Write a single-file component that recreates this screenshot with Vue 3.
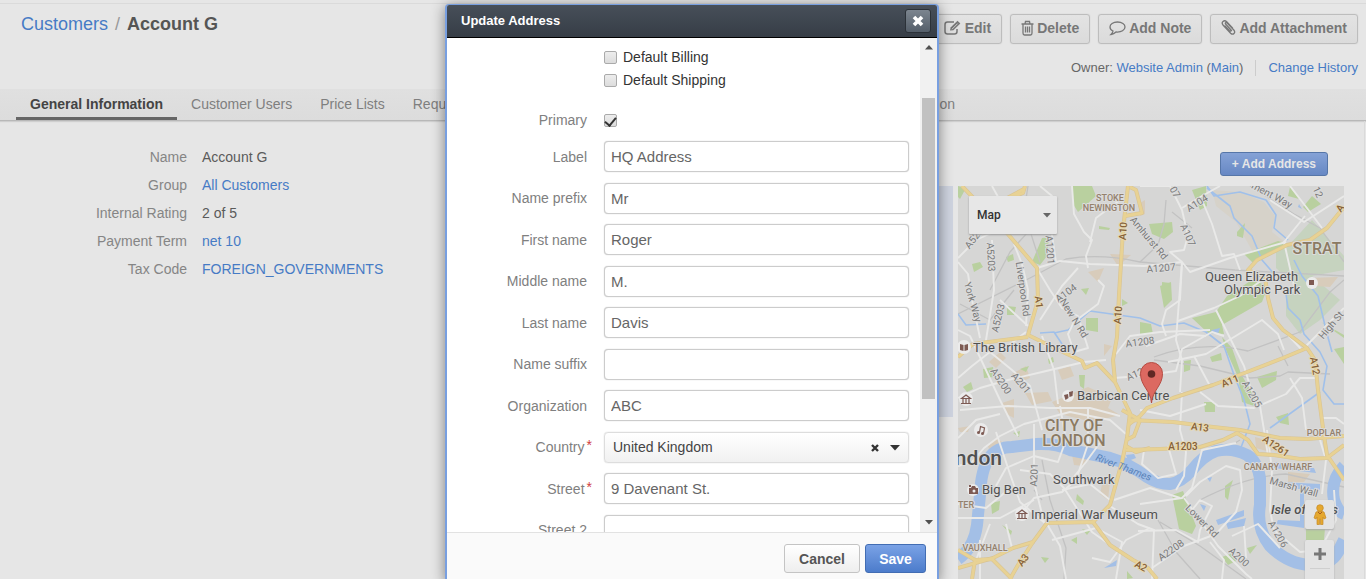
<script setup>
import { reactive, ref } from 'vue'

const tabs = ['General Information', 'Customer Users', 'Price Lists', 'Requests For Quote', 'Quotes', 'Shopping Lists', 'Additional Information']

const details = [
  { label: 'Name', value: 'Account G' },
  { label: 'Group', value: 'All Customers', link: true },
  { label: 'Internal Rating', value: '2 of 5' },
  { label: 'Payment Term', value: 'net 10', link: true },
  { label: 'Tax Code', value: 'FOREIGN_GOVERNMENTS', link: true }
]

const primary = ref(true)
const country = ref('United Kingdom')
const fields = reactive([
  { id: 'label', label: 'Label', value: 'HQ Address' },
  { id: 'prefix', label: 'Name prefix', value: 'Mr' },
  { id: 'first', label: 'First name', value: 'Roger' },
  { id: 'middle', label: 'Middle name', value: 'M.' },
  { id: 'last', label: 'Last name', value: 'Davis' },
  { id: 'suffix', label: 'Name suffix', value: '' },
  { id: 'org', label: 'Organization', value: 'ABC' },
  { id: 'country', label: 'Country', required: true, select: true },
  { id: 'street', label: 'Street', required: true, value: '9 Davenant St.' },
  { id: 'street2', label: 'Street 2', value: '' }
])

const parks = [
  '1073,186 1092,186 1096,196 1085,206 1078,212 1073,204', '958,186 966,188 960,199 958,197',
  '1042,238 1049,237 1047,256 1040,265 1032,262', '1006,257 1013,254 1014,260 1008,262', '972,264 980,262 983,267 974,272',
  '1149,224 1172,222 1173,232 1164,239 1152,234', '1192,190 1206,186 1207,206 1200,210', '1237,232 1245,223 1243,238 1237,236',
  '1290,187 1299,199 1288,196', '1303,207 1312,196 1321,204 1308,212', '1244,254 1278,241 1286,243 1270,254 1254,264',
  '1192,318 1216,312 1227,296 1252,280 1268,286 1262,302 1222,325 1224,334 1208,333', '1160,286 1171,282 1172,300 1164,308',
  '1222,337 1232,348 1241,374 1254,396 1257,407 1242,402 1238,377 1226,350', '1140,322 1151,324 1153,334 1140,335',
  '1210,357 1221,353 1222,360 1212,362', '1257,377 1277,371 1276,380 1262,388', '1204,402 1215,402 1215,412 1205,412',
  '1276,417 1288,413 1289,425 1280,423', '1334,349 1344,347 1344,364', '1086,318 1098,318 1098,332 1086,330',
  '1007,306 1016,307 1014,315 1007,315', '1081,289 1089,288 1086,295', '1122,299 1128,303 1122,306', '983,369 993,367 994,377 984,378',
  '963,387 971,382 973,389 967,392', '1048,359 1053,357 1054,362 1049,364', '1079,375 1085,375 1084,389 1080,386',
  '1020,369 1029,366 1026,372', '1099,226 1110,228 1109,230 1099,229', '1013,433 1020,431 1019,437', '991,503 1000,501 999,510 992,514',
  '1077,494 1084,501 1083,505 1076,500', '1172,495 1183,491 1196,526 1192,534 1179,529', '1225,486 1233,480 1230,489 1228,500 1225,497',
  '1002,525 1012,531 1011,535', '1041,557 1049,558 1045,563', '1071,540 1077,537 1077,544', '1082,529 1090,531 1087,535',
  '1127,571 1133,578 1127,579', '1247,548 1257,545 1250,554', '1222,557 1233,553 1236,561 1228,565', '1306,529 1325,528 1324,540 1306,540',
  '1162,282 1170,283 1168,290 1162,290', '1184,361 1191,360 1190,370 1184,372', '1321,322 1344,335 1344,338'
]
const sites = [
  '989,362 1000,352 1006,358 996,368', '1025,393 1048,392 1052,401 1032,405', '1052,402 1088,387 1112,398 1108,408 1120,415 1092,422 1060,414',
  '1012,374 1026,366 1030,378 1016,384', '1110,254 1131,255 1118,266', '1088,272 1104,268 1098,282', '1104,344 1112,346 1104,356',
  '1002,403 1014,399 1014,418 1006,414', '958,428 970,426 968,432 960,432', '1072,455 1088,457 1084,466 1074,465',
  '1102,484 1110,482 1108,500 1100,494', '1140,203 1145,200 1145,214 1140,216', '1308,278 1338,277 1330,287 1316,286',
  '1288,472 1310,474 1304,482 1288,482', '1255,437 1280,444 1270,452 1256,448', '988,446 996,438 1002,442 990,452', '1058,370 1070,366 1074,376 1062,380'
]
const rails = [
  'M958 314L1030 278L1066 259Q1100 253 1140 262L1235 270L1344 276', 'M1028 186L1024 212L1040 262', 'M990 290L1010 252L1028 232',
  'M1140 262L1158 245L1164 224L1166 200', 'M1192 228L1172 212', 'M1250 186L1294 214L1320 228L1344 262', 'M1154 357Q1200 340 1248 351L1300 332L1330 292L1344 280',
  'M1154 360L1200 366L1250 378L1280 376L1288 372L1330 374', 'M1160 522L1200 546L1246 579', 'M1042 460L1050 500L1066 548L1064 579',
  'M1200 500Q1246 476 1286 474L1344 487', 'M1278 346L1288 366', 'M960 304L990 320L1014 290', 'M1034 490L1042 500', 'M1158 520L1176 552L1200 579', 'M1170 482L1240 440'
]
const canals = [
  'M1040 333L1054 332L1062 344M1054 333L1068 330L1090 311L1140 318L1160 326L1184 323L1206 332L1224 346L1234 375L1244 400L1250 424L1240 450',
  'M958 314L966 325L986 324', 'M1207 186L1214 196L1240 192L1266 200L1276 215L1274 228L1288 240', 'M1207 188L1230 206L1234 218L1252 236L1262 260L1276 276',
  'M1286 294L1288 308L1300 320L1304 334L1320 352L1327 366L1323 390L1334 404L1344 404', 'M1294 260L1302 276L1318 296L1326 330L1332 352', 'M1270 428L1320 392'
]
const streets = [
  'M958 258L976 240L998 230L1002 204L992 186', 'M992 240L994 290L986 340L990 352', 'M1040 186L1052 196L1050 222L1056 262', 'M1072 186L1074 214L1084 232L1092 240L1086 256L1088 268',
  'M1090 242L1096 218L1120 200', 'M1037 268L1060 261L1090 264L1144 266L1182 262', 'M1014 244L1022 264L1028 290L1026 326', 'M1038 270L1050 290L1062 308L1078 316L1088 348L1074 352L1068 334L1074 322L1098 304L1104 286L1098 280',
  'M958 262L968 274L972 300L980 338', 'M958 330L970 336L1000 400L1018 436', 'M1000 300L1028 326M1040 320L1062 286L1078 268', 'M958 398L980 388L1008 380L1042 372L1084 362L1106 360',
  'M960 410L1008 406L1050 408L1090 408L1120 416', 'M990 352L1012 370L1030 386L1042 430', 'M1042 336L1054 370L1058 404', 'M1008 346L1026 332M1000 350L1012 344', 'M1116 354L1130 336L1160 332L1210 330',
  'M1114 378L1140 376L1176 371L1182 349L1212 332L1224 336', 'M1182 262L1176 340L1182 360L1180 392', 'M1140 186L1170 186L1182 210L1188 236L1184 250L1170 252L1182 262L1190 272L1230 258L1286 242',
  'M1182 208L1202 196L1220 186', 'M1202 200L1212 224L1222 256L1234 254L1240 270', 'M1182 262L1180 300L1166 310L1162 324L1166 336', 'M1168 362L1206 354L1262 320L1278 334L1284 350',
  'M1194 356L1210 386', 'M1216 310L1230 338L1244 366L1250 386L1260 406L1264 430L1268 456', 'M1178 321L1214 308L1240 296L1262 280', 'M1200 392L1218 406L1254 408L1286 394L1300 378L1316 378',
  'M1290 186L1310 212L1322 228', 'M1270 200L1304 222L1344 196', 'M1305 216L1284 242L1294 286', 'M1272 318L1302 350L1344 308', 'M1182 392L1180 430L1186 452L1184 476L1176 490',
  'M1140 504L1182 498L1192 488L1202 450L1236 443', 'M1184 498L1200 520L1218 546L1246 574L1252 579', 'M1152 568L1184 546L1216 534L1236 512L1242 490L1240 470L1226 466L1200 482L1186 496',
  'M1138 531L1176 530L1198 542L1200 530L1212 506L1200 500L1192 510', 'M1210 542L1224 560L1222 579', 'M1267 430L1272 470L1270 510L1274 530L1300 552L1320 550L1336 520L1334 490',
  'M1320 440L1326 460L1322 494', 'M1060 406L1066 440L1058 462L1034 456L1006 468L996 486', 'M1088 408L1088 444L1076 480L1062 492L1034 498L1016 520',
  'M1034 424L1034 482L1044 522', 'M958 466L972 462L984 448L1000 436L1024 424L1070 412L1110 420L1126 434', 'M996 432L1010 474L1020 502L1046 524', 'M1020 470L1050 474L1064 488L1092 532L1120 552',
  'M1062 490L1090 484L1110 500M1068 484L1086 462L1102 440', 'M958 518L1000 518L1034 500', 'M958 504L986 508L1008 490', 'M1047 524L1060 546L1066 579', 'M1052 540L1096 528L1122 542L1116 579',
  'M1110 506L1138 524L1154 530L1152 579', 'M1092 558L1110 562L1126 540L1150 528', 'M1180 498L1150 488L1114 500', 'M980 540L980 579M990 524L976 560', 'M1012 548L1006 524', 'M1244 526L1246 558',
  'M958 438L976 420L1000 414', 'M958 378L972 366L990 352', 'M1146 346L1180 334L1206 336', 'M1140 410L1170 416L1206 404', 'M1290 378L1302 398L1306 430', 'M1322 418L1336 418L1344 424',
  'M1144 450L1142 464L1158 478L1176 474L1168 446', 'M1232 536L1258 524L1280 548'
]
const mains = [
  'M962 186L1007 233L1037 268L1038 300L1028 335L1063 352L1082 361L1085 368L1097 363L1115 382L1130 413L1127 438L1122 462L1110 505L1093 522',
  'M958 357L973 344L1028 337', 'M1128 186L1123 230L1119 295L1117 337L1113 360L1115 381', 'M1130 187L1136 190L1142 213L1125 216', 'M1025 186L1023 193L1003 201M1024 189L996 204',
  'M1128 425L1140 416L1147 408L1173 398L1213 385L1247 372L1283 358L1307 348', 'M1344 207L1327 228L1310 240L1287 245L1257 260L1248 270L1265 277L1268 298L1273 318L1283 330L1307 348L1315 360L1318 390L1324 436L1327 455L1344 480',
  'M1130 420L1173 422L1213 427L1240 430L1280 438L1307 439L1344 436', 'M1126 450L1160 449L1200 447L1223 440L1237 433L1248 440L1258 454L1274 455L1300 459L1327 458L1344 445',
  'M958 568L993 558L1013 548L1033 542L1047 523L1093 522L1110 545L1133 560L1148 568L1157 579', 'M1033 542L1018 565L1010 579', 'M958 550L975 560L992 559L1012 579M975 560L972 579',
  'M1126 440L1134 436L1140 420L1122 410M1126 446L1136 452L1150 448'
]
const docks = ['1216,520 1244,510 1244,516 1218,525', '1226,523 1246,518 1244,526 1228,529', '1278,520 1300,521 1300,490 1304,490 1304,528 1276,524',
  '1274,462 1314,468 1316,473 1274,468', '1280,482 1320,484 1320,490 1280,488', '1207,478 1212,477 1210,482', '1200,504 1206,506 1204,511', '1212,330 1220,328 1218,334 1210,333',
  '1104,568 1117,560 1116,566', '1126,455 1134,454 1136,458 1128,461', '1299,204 1302,209 1298,207']

const roadLabels = [
  { t: 'A5203', x: 991, y: 257, r: 87 }, { t: 'A5203', x: 998, y: 318, r: -76 }, { t: 'A1201', x: 1050, y: 250, r: 86 }, { t: 'A520', x: 974, y: 238, r: -52 },
  { t: 'York Way', x: 973, y: 302, r: 74 }, { t: 'Liverpool Rd', x: 1023, y: 289, r: 82 }, { t: 'A104', x: 1066, y: 293, r: -36 }, { t: 'New N Rd', x: 1074, y: 318, r: 58 },
  { t: 'A5200', x: 1001, y: 381, r: 56 }, { t: 'A201', x: 1021, y: 383, r: 50 }, { t: 'A201', x: 1034, y: 475, r: -88 }, { t: 'A104', x: 1197, y: 203, r: -32 },
  { t: 'A107', x: 1188, y: 235, r: 66 }, { t: '07', x: 1175, y: 192, r: 60 }, { t: 'Amhurst Rd', x: 1149, y: 238, r: 50 }, { t: 'A1207', x: 1161, y: 268, r: -5 }, { t: '12', x: 1318, y: 192, r: 65 },
  { t: 'ment Way', x: 1272, y: 195, r: 28 }, { t: 'A1208', x: 1140, y: 342, r: -8 }, { t: 'A1209', x: 1140, y: 372, r: -24 }, { t: 'High St', x: 1331, y: 325, r: -50 },
  { t: 'A1205', x: 1252, y: 394, r: 60 }, { t: 'Marsh Wall', x: 1294, y: 487, r: 16 }, { t: 'A1206', x: 1278, y: 534, r: 60 }, { t: 'Lower Rd', x: 1202, y: 521, r: 45 },
  { t: 'A200', x: 1239, y: 557, r: 42 }, { t: 'A2208', x: 1171, y: 550, r: -35 }
]
const mainLabels = [
  { t: 'A10', x: 1123, y: 231, r: -86 }, { t: 'A10', x: 1118, y: 315, r: -86 }, { t: 'A1', x: 1039, y: 302, r: 82 }, { t: 'A11', x: 1230, y: 381, r: -22 },
  { t: 'A12', x: 1315, y: 366, r: 80 }, { t: 'A', x: 1340, y: 208, r: -55 }, { t: 'A13', x: 1200, y: 427, r: 7 }, { t: 'A1203', x: 1183, y: 446, r: 0 }, { t: 'A1261', x: 1276, y: 446, r: 34 },
  { t: 'A3', x: 1023, y: 560, r: -52 }, { t: 'A2', x: 1141, y: 566, r: 28 }
]
</script>

<template>
  <div class="page">
    <header class="header">
      <h1 class="crumbs"><a href="#">Customers</a><span class="slash">/</span><strong>Account G</strong></h1>
      <div class="side">
        <div class="actions">
          <button type="button" class="btn">
            <svg width="18" height="16" viewBox="0 0 18 16" fill="none" stroke="#777"><path d="M10 2H3.500Q1 2 1 4.500V11.500Q1 14 3.500 14H10.500Q13 14 13 11.500V9" stroke-width="1.500"/><path d="M6 10.500L6.600 7.600L13.500 .8L16.300 3.500L9.400 10.200Z" fill="#777" stroke="none"/><path d="M8 9.200L13.600 3.600" stroke="#dedede" stroke-width=".8"/></svg>
            Edit
          </button>
          <button type="button" class="btn">
            <svg width="13" height="16" viewBox="0 0 13 16" fill="none" stroke="#777" stroke-width="1.300"><path d="M.5 4H12.500M4 4L4.500 1.500H8.500L9 4M2 4V13Q2 15 3.500 15H9.500Q11 15 11 13V4M4.500 6.500V12.500M6.500 6.500V12.500M8.500 6.500V12.500"/></svg>
            Delete
          </button>
          <button type="button" class="btn">
            <svg width="17" height="16" viewBox="0 0 17 16" fill="none" stroke="#777" stroke-width="1.300"><path d="M8.500 2C4 2 1 4.300 1 7C1 8.800 2.200 10.200 4 11C3.800 12.500 3 13.500 2 14.500C4.500 14.200 6 13 7 12C12.500 12.500 16 10 16 7C16 4.300 13 2 8.500 2Z"/></svg>
            Add Note
          </button>
          <button type="button" class="btn">
            <svg width="15" height="16" viewBox="0 0 15 16" fill="none" stroke="#777" stroke-width="1.300" stroke-linecap="round"><path d="M10.500 10.500L4.800 4.300C3.500 3 5 1.800 6.200 3L12.800 10C15 12.700 12.200 15.600 9.600 13.200L2.200 5.300C-.5 2 3.200-.6 5.700 1.800L11.500 8M10.500 10.500C9.800 11.500 8.800 11 8.300 10.500L4 6"/></svg>
            Add Attachment
          </button>
        </div>
        <div class="meta">
          <span>Owner: <a href="#">Website Admin</a> (<a href="#">Main</a>)</span>
          <a href="#" class="history">Change History</a>
        </div>
      </div>
    </header>

    <nav class="tabs">
      <a v-for="(tab, i) in tabs" :key="tab" href="#" :class="{ active: i === 0 }">{{ tab }}</a>
    </nav>

    <main class="content">
      <dl class="details">
        <div v-for="d in details" :key="d.label">
          <dt>{{ d.label }}</dt>
          <dd><a v-if="d.link" href="#">{{ d.value }}</a><template v-else>{{ d.value }}</template></dd>
        </div>
      </dl>
      <section class="addresses">
        <button type="button" class="btn-add">+ Add Address</button>
        <div class="address-row">
          <div class="card"></div>
          <div class="map">
            <svg class="tiles" viewBox="958 186 386 393" preserveAspectRatio="xMinYMin slice">
              <rect x="958" y="186" width="386" height="393" fill="#d6d6d5"/>
              <path d="M1212 190L1240 192L1264 202L1275 216L1272 232L1286 243L1254 254L1236 222L1216 206Z" fill="#d6d2c9"/>
              <path d="M1290 244L1312 220L1344 256L1344 270L1312 276L1340 300L1320 320L1300 334L1286 316L1286 294L1300 290L1276 268L1276 250Z" fill="#c6d3bf"/>
              <polygon v-for="p in sites" :key="p" :points="p" fill="#d8ccbb"/>
              <polygon v-for="p in parks" :key="p" :points="p" fill="#b9d09f"/>
              <g fill="none" stroke-linejoin="round">
                <path v-for="p in rails" :key="p" :d="p" stroke="#c2c2c2" stroke-width="1.300"/>
                <path v-for="p in canals" :key="p" :d="p" stroke="#a0c0ea" stroke-width="1.600"/>
                <path d="M958 559Q974 548 977 525L980 495Q981 470 989 458Q997 447 1012 447L1037 444Q1056 443 1070 450L1110 458Q1128 463 1147 477Q1158 484 1170 484Q1182 482 1192 470Q1204 455 1216 451Q1232 447 1247 455Q1257 461 1260 478L1260 505Q1256 528 1270 546Q1288 564 1310 565Q1330 566 1338 552L1344 540" stroke="#a3bfe6" stroke-width="12"/>
                <path d="M1344 466Q1330 480 1334 500Q1338 512 1344 514" stroke="#a3bfe6" stroke-width="12"/>
              </g>
              <polygon v-for="p in docks" :key="p" :points="p" fill="#a3bfe6"/>
              <g fill="none" stroke-linejoin="round">
                <path v-for="p in streets" :key="p" :d="p" stroke="#e9e9e8" stroke-width="1.900"/>
                <path v-for="p in mains" :key="p" :d="p" stroke="#d9c493" stroke-width="4"/>
                <path v-for="p in mains" :key="p + 'i'" :d="p" stroke="#e8d294" stroke-width="2.800"/>
              </g>
              <g class="road">
                <text v-for="l in roadLabels" :key="l.t + l.x" :x="l.x" :y="l.y" :transform="`rotate(${l.r} ${l.x} ${l.y})`" dominant-baseline="central">{{ l.t }}</text>
              </g>
              <g class="road main-road">
                <text v-for="l in mainLabels" :key="l.t + l.x" :x="l.x" :y="l.y" :transform="`rotate(${l.r} ${l.x} ${l.y})`" dominant-baseline="central">{{ l.t }}</text>
              </g>
              <text class="water" x="1095" y="460" transform="rotate(21 1095 460)">River Thames</text>
              <g class="area">
                <text x="1110" y="201">STOKE</text><text x="1109" y="211">NEWINGTON</text>
                <text x="1278" y="470">CANARY WHARF</text><text x="1324" y="436">POPLAR</text>
                <text x="985" y="551">VAUXHALL</text><text x="966" y="508">TER</text>
                <text class="large" x="1074" y="431">CITY OF</text><text class="large" x="1074" y="446">LONDON</text>
                <text class="large" x="1317" y="254">STRAT</text>
              </g>
              <g fill="#ebebeb">
                <circle cx="1312" cy="283" r="6"/><circle cx="964" cy="347" r="7"/><circle cx="1068" cy="396" r="6"/><circle cx="966" cy="399" r="7"/><circle cx="981" cy="430" r="7"/><circle cx="973" cy="490" r="6"/><circle cx="1022" cy="514" r="7"/>
              </g>
              <g fill="#7d5a53">
                <path d="M1309 280h5v5h-5z"/><path d="M960 344l3.500 1v6l-3.500-1zM968 344l-3.500 1v6l3.500-1z"/>
                <path d="M1064 395l4-1 .5 4-3 2zM1069 392l4-1-.5 5-3 1z"/>
                <path d="M969 488h2l1-2h3l1 2h2v6h-9zM969 485h2v2h-2z"/>
              </g>
              <circle cx="974" cy="491" r="1.500" fill="#ebebeb"/>
              <g fill="none" stroke="#7d5a53" stroke-width="1.200">
                <path d="M961.500 398.500L966 395L970.500 398.500ZM963 399V403M966 399V403M969 399V403M961 403.500H971"/>
                <path d="M1017.500 513.500L1022 510L1026.500 513.500ZM1019 514V518M1022 514V518M1025 514V518M1017 518.500H1027"/>
                <path d="M979.500 432.500L980.500 426.500L984.500 428L983.500 433.500"/>
              </g>
              <g fill="#7d5a53"><circle cx="978.500" cy="432.500" r="1.500"/><circle cx="982.500" cy="433.500" r="1.500"/></g>
              <g class="place">
                <text x="973" y="352">The British Library</text><text x="1077" y="400">Barbican Centre</text>
                <text x="1205" y="281">Queen Elizabeth</text><text x="1224" y="294">Olympic Park</text>
                <text x="1053" y="484">Southwark</text><text x="982" y="494">Big Ben</text><text x="1031" y="519">Imperial War Museum</text>
                <text class="isle" x="1271" y="514">Isle of Dogs</text>
                <text class="city" x="1002" y="465">ndon</text>
              </g>
              <path d="M1151.500 403C1150.500 390 1140.500 386 1140.500 373.500A11 11 0 0 1 1162.500 373.500C1162.500 386 1152.500 390 1151.500 403Z" fill="#dc6961" stroke="#b64b42" stroke-width="1"/>
              <circle cx="1151.500" cy="374" r="3.800" fill="#602824"/>
            </svg>
            <div class="map-type">
              <select aria-label="Map type"><option>Map</option></select>
              <svg width="8" height="5" viewBox="0 0 8 5"><path d="M0 0H8L4 4.500Z" fill="#666"/></svg>
            </div>
            <div class="map-controls">
              <button type="button" aria-label="Street View">
                <svg width="14" height="22" viewBox="0 0 14 22"><g fill="#e5a82f" stroke="#c58a25" stroke-width=".7"><path d="M3 8Q7 6 11 8L13 14L11 15L10 13V20.500H7.500V15H6.500V20.500H4V13L3 15L1 14Z"/><circle cx="7" cy="4" r="3.300"/></g><path d="M5 8L7 10L9 8" fill="none" stroke="#a85c21"/></svg>
              </button>
              <button type="button" class="zoom" aria-label="Zoom in">
                <svg width="12" height="12" viewBox="0 0 12 12"><path d="M6 0V12M0 6H12" stroke="#777" stroke-width="3"/></svg>
              </button>
            </div>
          </div>
        </div>
      </section>
    </main>

    <div class="overlay">
      <form class="modal" role="dialog" aria-labelledby="dlg-title" @submit.prevent>
        <div class="modal-head">
          <h2 id="dlg-title">Update Address</h2>
          <button type="button" class="close" aria-label="Close">
            <svg width="12" height="12" viewBox="0 0 12 12"><path d="M2 2L10 10M10 2L2 10" stroke="#fff" stroke-width="3.600"/></svg>
          </button>
        </div>
        <div class="modal-body">
          <div class="scroll">
            <div class="defaults">
              <label><input type="checkbox"> Default Billing</label>
              <label><input type="checkbox"> Default Shipping</label>
            </div>
            <div class="row primary">
              <label for="primary">Primary</label>
              <input id="primary" v-model="primary" type="checkbox">
            </div>
            <div class="fields">
              <div v-for="f in fields" :key="f.id" class="row">
                <label :for="f.id" :class="{ required: f.required }">{{ f.label }}<em v-if="f.required">*</em></label>
                <div v-if="f.select" class="choice">
                  <select :id="f.id" v-model="country"><option>United Kingdom</option></select>
                  <button type="button" aria-label="Clear country"><svg width="8" height="8" viewBox="0 0 8 8"><path d="M1 1L7 7M7 1L1 7" stroke="#333" stroke-width="2.400"/></svg></button>
                  <svg class="caret" width="10" height="6" viewBox="0 0 10 6"><path d="M0 0H10L5 5.500Z" fill="#333"/></svg>
                </div>
                <input v-else :id="f.id" v-model="f.value" type="text">
              </div>
            </div>
          </div>
          <div class="scrollbar" aria-hidden="true">
            <svg width="8" height="5" viewBox="0 0 8 5"><path d="M0 4.500H8L4 0Z" fill="#505050"/></svg>
            <div class="track"><div class="thumb"></div></div>
            <svg width="8" height="5" viewBox="0 0 8 5"><path d="M0 0H8L4 4.500Z" fill="#505050"/></svg>
          </div>
        </div>
        <div class="modal-foot">
          <button type="button" class="cancel">Cancel</button>
          <button type="submit" class="save">Save</button>
        </div>
      </form>
    </div>
  </div>
</template>

<style>
body { background: #e6e6e6; }
</style>

<style scoped>
* { box-sizing: border-box; }
button, input, select { font-family: inherit; margin: 0; }
a { color: #467bc5; text-decoration: none; }
.page { position: relative; height: 100vh; display: flex; flex-direction: column; overflow: hidden; font: 14px/20px "Liberation Sans", Arial, sans-serif; color: #666; background: #e6e6e6; }
.header { display: flex; justify-content: space-between; height: 86px; flex: none; padding: 10px 8px 0 21px; margin-top: 3px; border-top: 1px solid #dadada; }
.crumbs { margin: 0; font-size: 18px; line-height: 20px; font-weight: 400; }
.crumbs strong { color: #555; }
.slash { color: #999; margin: 0 7px; }
.side { display: flex; flex-direction: column; align-items: flex-end; gap: 14px; }
.actions { display: flex; gap: 8px; }
.btn { display: flex; align-items: center; gap: 3px; height: 30px; padding: 0 10px 2px; font-size: 14px; font-weight: 700; color: #777; border: 1px solid #bdbdbd; border-radius: 3px; background: linear-gradient(#e3e3e3, #dbdbdb); box-shadow: 0 0 1px #bbb; }
.meta { display: flex; gap: 12px; font-size: 13px; }
.history { border-left: 1px solid #ccc; padding-left: 12px; line-height: 16px; margin: 2px 0; }
.tabs { display: flex; height: 32px; flex: none; padding: 0 397px 0 16px; background: linear-gradient(#e0e0e0, #dcdcdc); border-bottom: 1px solid #b8b8b8; box-shadow: 0 1px 1px #cfcfcf; }
.tabs a { padding: 5px 14px 0; white-space: nowrap; color: #7f7f7f; }
.tabs a.active { color: #444; font-weight: 700; border-bottom: 3px solid #666; }
.tabs a:last-child { margin-left: auto; }
.content { flex: 1; display: flex; justify-content: space-between; margin-right: 1px; border-right: 1px solid #dadada; padding: 26px 20px 0 16px; min-height: 0; }
.details { margin: 0; display: flex; flex-direction: column; gap: 8px; flex: none; }
.details div { display: flex; gap: 15px; }
.details dt { width: 171px; text-align: right; color: #858585; }
.details dd { margin: 0; color: #5a5a5a; }
.addresses { display: flex; flex-direction: column; align-items: flex-end; padding-top: 5px; gap: 10px; }
.btn-add { height: 24px; flex: none; margin-right: 16px; padding: 0 11px; font-size: 12px; font-weight: 700; color: #e6e6e6; border: 1px solid #5676a8; border-radius: 3px; background: linear-gradient(#85a2d6, #6788c4); }
.address-row { display: flex; gap: 5px; flex: 1; }
.card { width: 400px; height: 231px; background: #ced3df; }
.map { position: relative; width: 386px; overflow: hidden; font-family: Roboto, sans-serif; }
.tiles { display: block; width: 100%; height: 100%; }
.tiles text { paint-order: stroke; stroke: #dcdcdc; stroke-width: 2px; stroke-linejoin: round; }
.road text { font-size: 10px; fill: #797979; text-anchor: middle; }
.main-road text { fill: #866037; font-weight: 500; stroke: #e5d9b6; }
.area text { font-size: 9px; font-weight: 500; fill: #94816d; text-anchor: middle; }
.area .large { font-size: 16px; fill: #8b7a62; }
.place text { font-size: 13px; fill: #505050; }
.place .isle { font-style: italic; font-weight: 500; }
.place .city { font-size: 21px; font-weight: 500; text-anchor: end; }
.tiles .water { font-size: 10px; font-style: italic; fill: #5a83b9; stroke: none; }
.map-type { position: absolute; left: 11px; top: 10px; width: 88px; height: 38px; background: #e7e7e7; box-shadow: 0 1px 2px #999; border-radius: 1px; }
.map-type select { width: 100%; height: 100%; border: 0; padding: 0 8px; appearance: none; background: none; font-size: 12px; font-weight: 500; color: #333; }
.map-type svg { position: absolute; right: 6px; top: 17px; pointer-events: none; }
.map-controls { position: absolute; right: 10px; top: 314px; width: 29px; display: flex; flex-direction: column; gap: 11px; }
.map-controls button { height: 29px; padding: 0; border: 0; display: grid; place-items: center; background: #e3e3e3; border-radius: 2px; box-shadow: 0 1px 2px #aaa; }
.map-controls .zoom { height: 58px; padding-top: 8px; place-items: start center; background: linear-gradient(#cfcfcf, #cfcfcf) center 28px / 20px 1px no-repeat #e3e3e3; }
.overlay { position: absolute; inset: 0; display: flex; justify-content: center; padding: 4px 0 0 18px; }
.modal { width: 494px; display: flex; flex-direction: column; margin-bottom: -2px; background: #fff; border: 1px solid #789fe0; border-width: 1px 2px; border-radius: 4px 4px 0 0; box-shadow: 0 2px 14px rgba(0, 0, 0, .45); }
.modal-head { display: flex; align-items: center; justify-content: space-between; height: 33px; flex: none; padding: 0 6px 0 14px; background: linear-gradient(#474f59, #363d46); border-bottom: 1px solid #000; border-radius: 2px 2px 0 0; }
.modal-head h2 { margin: 0; font-size: 13px; line-height: 18px; color: #fff; }
.close { width: 26px; height: 24px; padding: 0; display: grid; place-items: center; border: 1px solid #2b3138; border-radius: 3px; background: linear-gradient(#7c858f, #545e69); }
.modal-body { flex: 1; display: flex; min-height: 0; }
.scroll { flex: 1; padding: 9px 11px 0 0; overflow: hidden; }
.defaults { display: flex; flex-direction: column; gap: 3px; padding-left: 157px; color: #333; }
.defaults label { display: flex; align-items: center; gap: 6px; }
input[type="checkbox"] { appearance: none; width: 13px; height: 13px; flex: none; border: 1px solid #aaa; border-radius: 2px; background: linear-gradient(#ededed, #dcdcdc); }
.row input[type="checkbox"]:checked { display: grid; justify-items: center; }
input[type="checkbox"]:checked::after { content: ""; width: 5px; height: 9px; border: solid #333; border-width: 0 2px 2px 0; transform: rotate(40deg); }
.row { display: grid; grid-template-columns: 157px 1fr; align-items: center; }
.row > label { padding-right: 17px; text-align: right; color: #808080; }
.row > label.required { padding-right: 12px; }
.row em { margin-left: 2px; line-height: 12px; vertical-align: 2px; font-style: normal; color: #d0403d; }
.primary { margin: 20px 0 11px; }
.fields { display: grid; align-content: space-between; height: 405px; }
.row input[type="text"], .choice select { width: 100%; height: 31px; padding: 0 6px; font-size: 15px; color: #666; border: 1px solid #ccc; border-radius: 4px; background: #fff; box-shadow: 0 0 1px #bbb; display: block; }
.choice { position: relative; }
.choice select { appearance: none; padding: 0 8px; font-size: 14px; color: #444; border-color: #ddd; background: linear-gradient(#fff, #f1f1f1); }
.choice button { position: absolute; right: 26px; top: 8px; width: 16px; height: 16px; padding: 0; border: 0; background: none; display: grid; place-items: center; }
.caret { position: absolute; right: 9px; top: 13px; pointer-events: none; }
.scrollbar { width: 17px; display: flex; flex-direction: column; align-items: center; padding: 7px 0; background: #f1f1f1; }
.track { flex: 1; align-self: stretch; padding: 48px 2px; }
.thumb { height: 301px; background: #c1c1c1; }
.modal-foot { flex: none; height: 48px; display: flex; justify-content: flex-end; gap: 5px; padding: 11px 11px 0; background: #fafafa; border-top: 1px solid #e2e2e2; }
.modal-foot button { height: 29px; font-size: 14px; font-weight: 700; border-radius: 3px; }
.cancel { width: 76px; color: #555; border: 1px solid #c4c4c4; background: linear-gradient(#fff, #eee); }
.save { width: 61px; color: #fff; border: 1px solid #426db3; background: linear-gradient(#7aa2e6, #4c7ccb); }
</style>
